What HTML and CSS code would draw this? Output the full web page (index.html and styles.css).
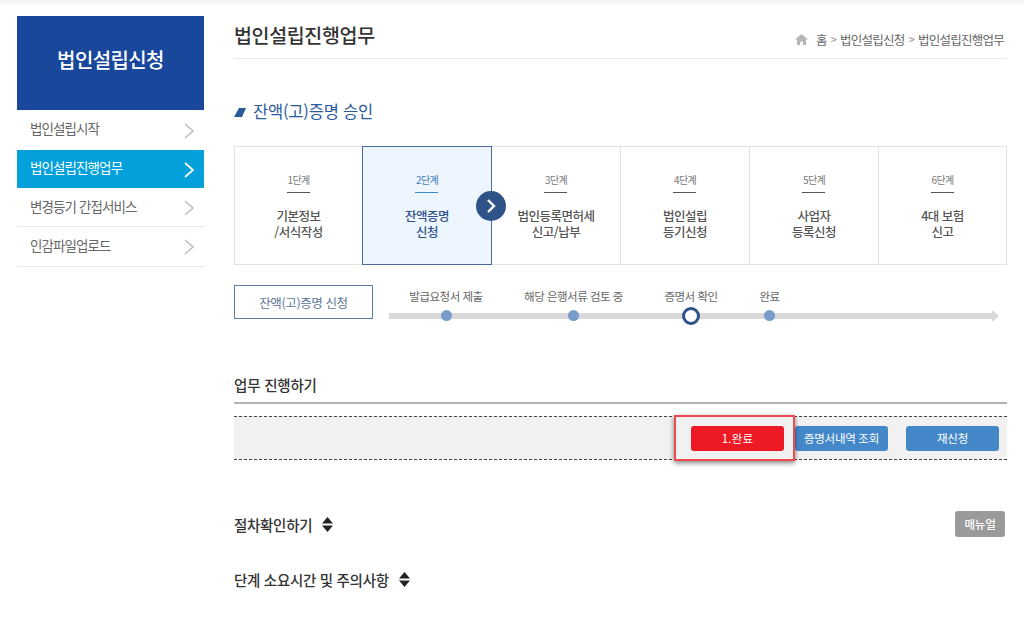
FILE: index.html
```html
<!DOCTYPE html>
<html lang="ko">
<head>
<meta charset="utf-8">
<title>법인설립진행업무</title>
<link rel="stylesheet" href="styles.css">
</head>
<body>
<div class="topshade"></div>
<div class="page">
  <aside class="side">
    <h2 class="side-head">법인설립신청</h2>
    <ul class="side-menu">
      <li class="side-item"><span>법인설립시작</span><svg class="chev" width="12" height="18" viewBox="0 0 12 18"><path d="M2 2l8 7-8 7" fill="none" stroke="#bdbdbd" stroke-width="1.5"/></svg></li>
      <li class="side-item on"><span>법인설립진행업무</span><svg class="chev" width="12" height="18" viewBox="0 0 12 18"><path d="M2 2l8 7-8 7" fill="none" stroke="#fff" stroke-width="1.8"/></svg></li>
      <li class="side-item"><span>변경등기 간접서비스</span><svg class="chev" width="12" height="18" viewBox="0 0 12 18"><path d="M2 2l8 7-8 7" fill="none" stroke="#bdbdbd" stroke-width="1.5"/></svg></li>
      <li class="side-item"><span>인감파일업로드</span><svg class="chev" width="12" height="18" viewBox="0 0 12 18"><path d="M2 2l8 7-8 7" fill="none" stroke="#bdbdbd" stroke-width="1.5"/></svg></li>
    </ul>
  </aside>
  <main class="main">
    <header class="title-bar">
      <h1 class="title">법인설립진행업무</h1>
      <nav class="crumbs">
        <svg class="home" width="13" height="11" viewBox="0 0 13 11"><path d="M6.5 0L0 5.6h2V11h3.2V7.4h2.6V11H11V5.6h2z" fill="#b5b5b5"/></svg>
        <span class="crumb-home">홈</span><span class="sep">&gt;</span><span>법인설립신청</span><span class="sep">&gt;</span><span>법인설립진행업무</span>
      </nav>
    </header>
    <h3 class="section"><svg class="slash" width="12" height="9" viewBox="0 0 12 9"><path d="M5 0h7L8 9H0z" fill="#2b5a9c"/></svg>잔액(고)증명 승인</h3>
    <ol class="steps">
      <li class="step"><span class="step-no">1단계</span><span class="step-name">기본정보<br>/서식작성</span></li>
      <li class="step cur"><span class="step-no">2단계</span><span class="step-name">잔액증명<br>신청</span>
        <svg class="step-go" width="30" height="30" viewBox="0 0 30 30"><circle cx="15" cy="15" r="15" fill="#2f5289"/><path d="M12 9l6 6-6 6" fill="none" stroke="#fff" stroke-width="2.4"/></svg>
      </li>
      <li class="step"><span class="step-no">3단계</span><span class="step-name">법인등록면허세<br>신고/납부</span></li>
      <li class="step"><span class="step-no">4단계</span><span class="step-name">법인설립<br>등기신청</span></li>
      <li class="step"><span class="step-no">5단계</span><span class="step-name">사업자<br>등록신청</span></li>
      <li class="step"><span class="step-no">6단계</span><span class="step-name">4대 보험<br>신고</span></li>
    </ol>
    <section class="track-row">
      <div class="track-label">잔액(고)증명 신청</div>
      <div class="track">
        <div class="track-line"></div>
        <div class="stop s1"><span>발급요청서 제출</span><i></i></div>
        <div class="stop s2"><span>해당 은행서류 검토 중</span><i></i></div>
        <div class="stop s3 now"><span>증명서 확인</span><i></i></div>
        <div class="stop s4"><span>완료</span><i></i></div>
      </div>
    </section>
    <h4 class="work-head">업무 진행하기</h4>
    <div class="work-bar">
      <button class="btn red">1.완료</button>
      <button class="btn blue wide">증명서내역 조회</button>
      <button class="btn blue">재신청</button>
      <div class="highlight"></div>
    </div>
    <div class="toggle first">
      <span class="toggle-text">절차확인하기</span>
      <svg class="updown" width="11" height="15" viewBox="0 0 11 15"><path d="M5.5 0l5.5 6.5H0zM5.5 15L0 8.5h11z" fill="#222"/></svg>
      <button class="manual">매뉴얼</button>
    </div>
    <div class="toggle second">
      <span class="toggle-text">단계 소요시간 및 주의사항</span>
      <svg class="updown" width="11" height="15" viewBox="0 0 11 15"><path d="M5.5 0l5.5 6.5H0zM5.5 15L0 8.5h11z" fill="#222"/></svg>
    </div>
  </main>
</div>
</body>
</html>
```
FILE: styles.css
```css
* { box-sizing: border-box; }
html, body { margin: 0; padding: 0; }
body {
  background: #fff;
  color: #333;
  font-family: "Noto Sans CJK KR", "Noto Sans", sans-serif;
  height: 618px;
  overflow: hidden;
  position: relative;
}
h1, h2, h3, h4, ul, ol { margin: 0; padding: 0; list-style: none; font-weight: 400; }
button { font-family: inherit; border: 0; padding: 0; }
.topshade {
  position: absolute; left: 0; right: 0; top: 0; height: 6px;
  background: linear-gradient(#f3f3f3, #fff);
}
.page { display: flex; padding: 16px 17px 0; gap: 30px; }

.side { width: 187px; flex: none; }
.side-head {
  height: 94px; background: #19479b; color: #fff;
  font-size: 20px; font-weight: 500; letter-spacing: -0.6px;
  display: flex; align-items: center; justify-content: center;
  padding-bottom: 7px;
}
.side-item {
  height: 39.5px; display: flex; align-items: center; justify-content: space-between;
  padding: 0 9px 0 13px; font-size: 13.5px; letter-spacing: -0.9px; color: #666;
  border-bottom: 1px solid #e6e6e6;
}
.side-item span { margin-bottom: 2px; }
.side-item:first-child { border-bottom: 0; }
.side-item:first-child span { margin-bottom: 4px; }
.side-item.on { background: #03a0dc; color: #fff; border-bottom: 0; height: 38px; }
.side-item.on span { margin-bottom: 3px; }
.chev { margin-top: 2px; }

.main { width: 773px; flex: none; }
.title-bar {
  height: 43px; display: flex; align-items: flex-start; justify-content: space-between;
  border-bottom: 1px solid #e6e6e6;
}
.title { font-size: 19.5px; line-height: 38px; color: #333; letter-spacing: -0.35px; font-weight: 500; }
.crumbs {
  display: flex; align-items: center; font-size: 12.5px; letter-spacing: -0.75px; color: #666;
  margin-top: 13px; padding-right: 3px; height: 20px;
}
.home { margin-right: 8px; }
.sep { margin: 0 4px; color: #888; font-size: 11px; }

.section {
  margin-top: 40px; height: 24px; display: flex; align-items: center;
  font-size: 16.5px; color: #2b5a9c; letter-spacing: -0.2px;
}
.slash { margin-right: 7px; margin-top: 2px; }

.steps {
  margin-top: 23px; display: grid; height: 119px;
  grid-template-columns: 127px 130px 129px 129px 129px 1fr;
  border: 1px solid #e3e3e3;
}
.step {
  position: relative; display: flex; flex-direction: column; align-items: center;
  border-right: 1px solid #e3e3e3; padding-top: 26px;
}
.step:first-child, .step:last-child { border-right: 0; }
.step-no {
  font-size: 10px; letter-spacing: -0.7px; color: #777; line-height: 14px;
  padding-bottom: 6px; position: relative;
}
.step-no::after {
  content: ""; position: absolute; left: 50%; bottom: 0; width: 23px; height: 1px;
  margin-left: -11.5px; background: #555;
}
.step-name {
  margin-top: 15px; font-size: 12.5px; line-height: 16px; font-weight: 500;
  letter-spacing: -0.5px; text-align: center; color: #555;
}
.step.cur {
  background: #edf5fe; border: 1px solid #4a6b9a; margin: -1px 0; padding-top: 26px;
}
.step.cur .step-no { color: #3f7fc0; }
.step.cur .step-no::after { background: #3f8ccb; }
.step.cur .step-name { color: #2f5289; }
.step-go { position: absolute; right: -15px; top: 44px; z-index: 1; }

.track-row { margin-top: 20px; display: flex; height: 40px; }
.track-label {
  width: 139px; height: 34px; flex: none; border: 1px solid #5c7ba6;
  display: flex; align-items: center; justify-content: center;
  font-size: 12.5px; letter-spacing: -0.4px; color: #5c7596;
}
.track { flex: 1; position: relative; margin-left: 16px; }
.track-line {
  position: absolute; left: 0; right: 15px; top: 28px; height: 6px; background: #d9d9d9;
}
.track-line::after {
  content: ""; position: absolute; right: -7px; top: -3px;
  border-left: 7px solid #d9d9d9; border-top: 6px solid transparent; border-bottom: 6px solid transparent;
}
.stop {
  position: absolute; top: 2px; width: 160px; margin-left: -80px;
  display: flex; flex-direction: column; align-items: center;
  font-size: 11.5px; letter-spacing: -0.5px; color: #666; line-height: 18px;
}
.stop i {
  width: 11px; height: 11px; border-radius: 50%; background: #789ccb;
  position: absolute; top: 23px; left: 74.5px;
}
.stop.now i {
  width: 18px; height: 18px; left: 71px; top: 19.5px;
  background: #fff; border: 3.5px solid #2f5289;
}
.s1 { left: 57px; }
.s2 { left: 184.5px; }
.s3 { left: 302px; }
.s4 { left: 380.5px; }

.work-head {
  margin-top: 41px; height: 38px; padding-top: 1px; line-height: 36px; font-size: 14.5px; font-weight: 500;
  color: #333; letter-spacing: -0.2px; border-bottom: 2px solid #b3b3b3;
}
.work-bar {
  margin-top: 12px; height: 44px; position: relative;
  background: #f1f1f1; border-top: 1px dashed #444; border-bottom: 1px dashed #444;
  display: flex; align-items: center; justify-content: flex-end; padding: 0 8px 0 0; gap: 18px;
}
.btn {
  height: 25px; width: 93px; border-radius: 3px; color: #fff;
  font-size: 11.5px; letter-spacing: -0.3px; line-height: 25px;
}
.btn.red { background: #ed1a25; margin-right: -7px; letter-spacing: 0.2px; }
.btn.wide { margin-right: 0; }
.btn.blue { background: #4588ca; }
.highlight {
  position: absolute; left: 440px; top: -2px; width: 121px; height: 46px;
  border: 2px solid #f04a4e; box-shadow: 0 2px 5px rgba(0,0,0,.5);
}
.toggle { display: flex; align-items: center; font-size: 14.5px; font-weight: 500; letter-spacing: -0.3px; color: #333; }
.toggle-text { margin-right: 10px; }
.first { margin-top: 51px; height: 27px; }
.second { margin-top: 28px; height: 27px; }
.manual {
  margin: -2px 2px 0 auto; width: 50px; height: 26px; border-radius: 3px;
  background: #9a9a9a; color: #fff; font-size: 11.5px; font-weight: 500; letter-spacing: -0.3px;
}
```
